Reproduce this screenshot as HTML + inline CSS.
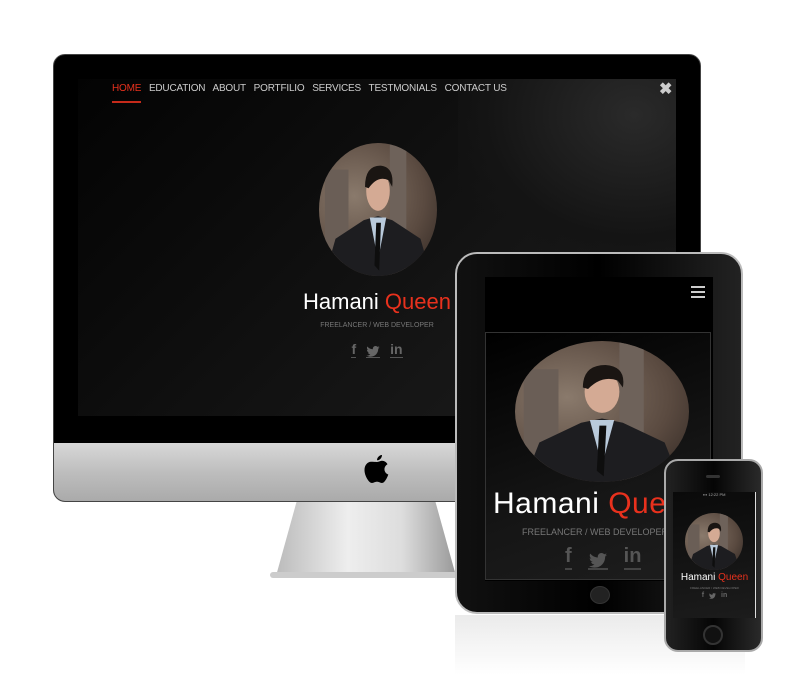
<!DOCTYPE html>
<html><head><style>
*{margin:0;padding:0;box-sizing:border-box}
body{width:791px;height:688px;background:#fff;position:relative;overflow:hidden;font-family:"Liberation Sans",sans-serif}
.a{position:absolute}
.photo{position:absolute;border-radius:50%;overflow:hidden;background:radial-gradient(ellipse at 30% 40%,#8a7a6c,#5a4a40 60%,#2a221e)}
.photo svg{width:100%;height:100%;display:block}
.red{color:#e8311d}
.soc{display:flex;justify-content:center;align-items:flex-end;color:#666;font-weight:bold}
</style></head><body>
<svg width="0" height="0" style="position:absolute"><defs>
<symbol id="tw" viewBox="0 0 24 20"><path d="M24 2.4c-.9.4-1.8.7-2.8.8 1-.6 1.8-1.6 2.2-2.7-1 .6-2 1-3.1 1.2C19.4.7 18.1 0 16.6 0c-2.7 0-4.900 2.2-4.9 4.9 0 .4 0 .8.1 1.1C7.7 5.8 4.1 3.9 1.7.9c-.4.7-.7 1.6-.7 2.5 0 1.7.9 3.2 2.2 4.1-.8 0-1.6-.2-2.2-.6v.1c0 2.4 1.7 4.4 3.9 4.8-.4.1-.8.2-1.3.2-.3 0-.6 0-.9-.1.6 2 2.4 3.4 4.6 3.4-1.7 1.300-3.800 2.1-6.1 2.1-.4 0-.8 0-1.2-.1 2.2 1.4 4.8 2.2 7.5 2.2 9.1 0 14-7.5 14-14v-.6c1-.7 1.8-1.6 2.5-2.5z" fill="currentColor"/></symbol>
<symbol id="man" viewBox="0 0 100 100" preserveAspectRatio="none"><rect x="60" y="0" width="14" height="100" fill="#6e625a"/><rect x="5" y="20" width="20" height="70" fill="#6a5e56"/><path d="M5 100 L14 72 L38 58 L50 55 L62 58 L86 72 L95 100Z" fill="#1d1d20"/><path d="M43 56 L50 88 L57 56Z" fill="#b9cadb"/><path d="M48.5 60 L47 92 L51 96 L52.5 60Z" fill="#0e0e0e"/><ellipse cx="50" cy="36" rx="10" ry="15" fill="#d4aa94"/><path d="M39 33 Q39 17 52 17 Q64 18 62 33 L59 28 Q50 24 42 34Z" fill="#1a1512"/></symbol>
</defs></svg>
<div class="a" style="left:276px;top:498px;width:180px;height:78px;background:linear-gradient(90deg,#bbb,#eee 40%,#ddd 70%,#999);clip-path:polygon(12% 0,88% 0,100% 100%,0 100%)"></div>
<div class="a" style="left:270px;top:572px;width:192px;height:6px;background:#ccc;border-radius:3px"></div>
<div class="a" style="left:53px;top:54px;width:648px;height:448px;background:#000;border-radius:12px;border:1px solid #444;overflow:hidden">
 <div class="a" style="left:0;top:388px;width:648px;height:60px;background:linear-gradient(#d8d8d8,#bdbdbd 50%,#a9a9a9)"></div>
</div>
<svg class="a" style="left:363px;top:453px" width="28" height="32" viewBox="0 0 28 32"><path d="M19 2c0 3-2.5 5.5-5 5.3C14 4.5 16.5 2 19 2zM14 9c2 0 3-1.2 5-1.2 2.5 0 4.5 1.5 5.5 3.5-4.5 2.5-3.8 8.8.8 10.2-1.3 3.8-3.8 8.5-6.3 8.5-2 0-2.5-1.2-5-1.2s-3.3 1.2-5 1.2C6 30 1.5 23 1.5 17c0-5 3.3-8.2 6.5-8.2C10.5 8.8 12 9 14 9z" fill="#000"/></svg>
<div class="a" style="left:78px;top:79px;width:598px;height:337px;background:linear-gradient(135deg,#030303,#0e0e0e 40%,#161616 70%,#1c1c1c);overflow:hidden">
 <div class="a" style="left:380px;top:0;width:220px;height:180px;background:radial-gradient(ellipse at 80% 20%,#2a2a2a,#141414 60%,transparent 80%)"></div>
 <div class="a" style="left:34px;top:4px;font-size:10px;color:#ccc;letter-spacing:-.2px;white-space:nowrap">
  <span class="red" style="border-bottom:2px solid #c62a1a;padding-bottom:7px">HOME</span>&nbsp;&nbsp; EDUCATION&nbsp;&nbsp; ABOUT&nbsp;&nbsp; PORTFILIO&nbsp;&nbsp; SERVICES&nbsp;&nbsp; TESTMONIALS&nbsp;&nbsp; CONTACT US</div>
 <div class="a" style="left:581px;top:0;font-size:16px;color:#ccc;font-weight:bold">✖</div>
 <div class="photo" style="left:241px;top:64px;width:118px;height:133px"><svg><use href="#man"/></svg></div>
 <div class="a" style="left:0;top:210px;width:598px;text-align:center;font-size:22px;color:#fff">Hamani <span class="red">Queen</span></div>
 <div class="a" style="left:0;top:243px;width:598px;text-align:center;font-size:7px;color:#777">FREELANCER / WEB DEVELOPER</div>
 <div class="a soc" style="left:0;top:262px;width:598px;font-size:14px;gap:10px">
  <span style="border-bottom:1px solid #555">f</span><svg width="14" height="12" style="border-bottom:1px solid #555"><use href="#tw"/></svg><span style="border-bottom:1px solid #555">in</span></div>
</div>
<div class="a" style="left:455px;top:615px;width:290px;height:60px;background:linear-gradient(#ddd,#fff);opacity:.6"></div>
<div class="a" style="left:455px;top:252px;width:288px;height:362px;background:linear-gradient(90deg,#111,#000 50%,#222);border-radius:22px;border:2px solid #bbb">
 <div class="a" style="left:133px;top:332px;width:20px;height:18px;border-radius:50%;background:#222;border:1px solid #333"></div>
</div>
<div class="a" style="left:485px;top:277px;width:228px;height:304px;background:#000;overflow:hidden">
 <div class="a" style="left:0;top:55px;width:226px;height:248px;border:1px solid #333;background:linear-gradient(160deg,#000,#151515 60%,#1e1e1e)"></div>
 <div class="a" style="left:206px;top:9px;width:14px;height:12px;border-top:2px solid #ccc;border-bottom:2px solid #ccc"><div style="margin-top:3px;border-top:2px solid #ccc"></div></div>
 <div class="photo" style="left:30px;top:64px;width:174px;height:141px"><svg><use href="#man"/></svg></div>
 <div class="a" style="left:8px;top:210px;font-size:30px;color:#fff;white-space:nowrap;letter-spacing:.5px">Hamani <span class="red">Queen</span></div>
 <div class="a" style="left:37px;top:250px;font-size:9px;color:#777;white-space:nowrap">FREELANCER / WEB DEVELOPER</div>
 <div class="a soc" style="left:80px;top:268px;font-size:20px;gap:16px;color:#555">
  <span style="border-bottom:2px solid #444">f</span><svg width="20" height="17" style="border-bottom:2px solid #444"><use href="#tw"/></svg><span style="border-bottom:2px solid #444">in</span></div>
</div>
<div class="a" style="left:664px;top:459px;width:99px;height:193px;background:linear-gradient(90deg,#222,#050505 50%,#2a2a2a);border-radius:14px;border:2px solid #aaa">
 <div class="a" style="left:40px;top:14px;width:14px;height:3px;background:#333;border-radius:2px"></div>
 <div class="a" style="left:37px;top:164px;width:20px;height:20px;border-radius:50%;background:#111;border:2px solid #333"></div>
</div>
<div class="a" style="left:673px;top:492px;width:83px;height:126px;background:linear-gradient(170deg,#0a0a0a,#1c1c1c);border-right:1px solid #ddd;overflow:hidden">
 <div class="a" style="left:30px;top:0;font-size:4px;color:#aaa">▪▪▪ 12:22 PM</div>
 <div class="photo" style="left:12px;top:21px;width:58px;height:57px"><svg><use href="#man"/></svg></div>
 <div class="a" style="left:0;top:80px;width:83px;text-align:center;font-size:10px;color:#fff;white-space:nowrap">Hamani <span class="red">Queen</span></div>
 <div class="a" style="left:0;top:94px;width:83px;text-align:center;font-size:3px;color:#777">FREELANCER / WEB DEVELOPER</div>
 <div class="a soc" style="left:0;top:100px;width:83px;font-size:7px;gap:5px">f<svg width="7" height="6"><use href="#tw"/></svg>in</div>
</div>
</body></html>
